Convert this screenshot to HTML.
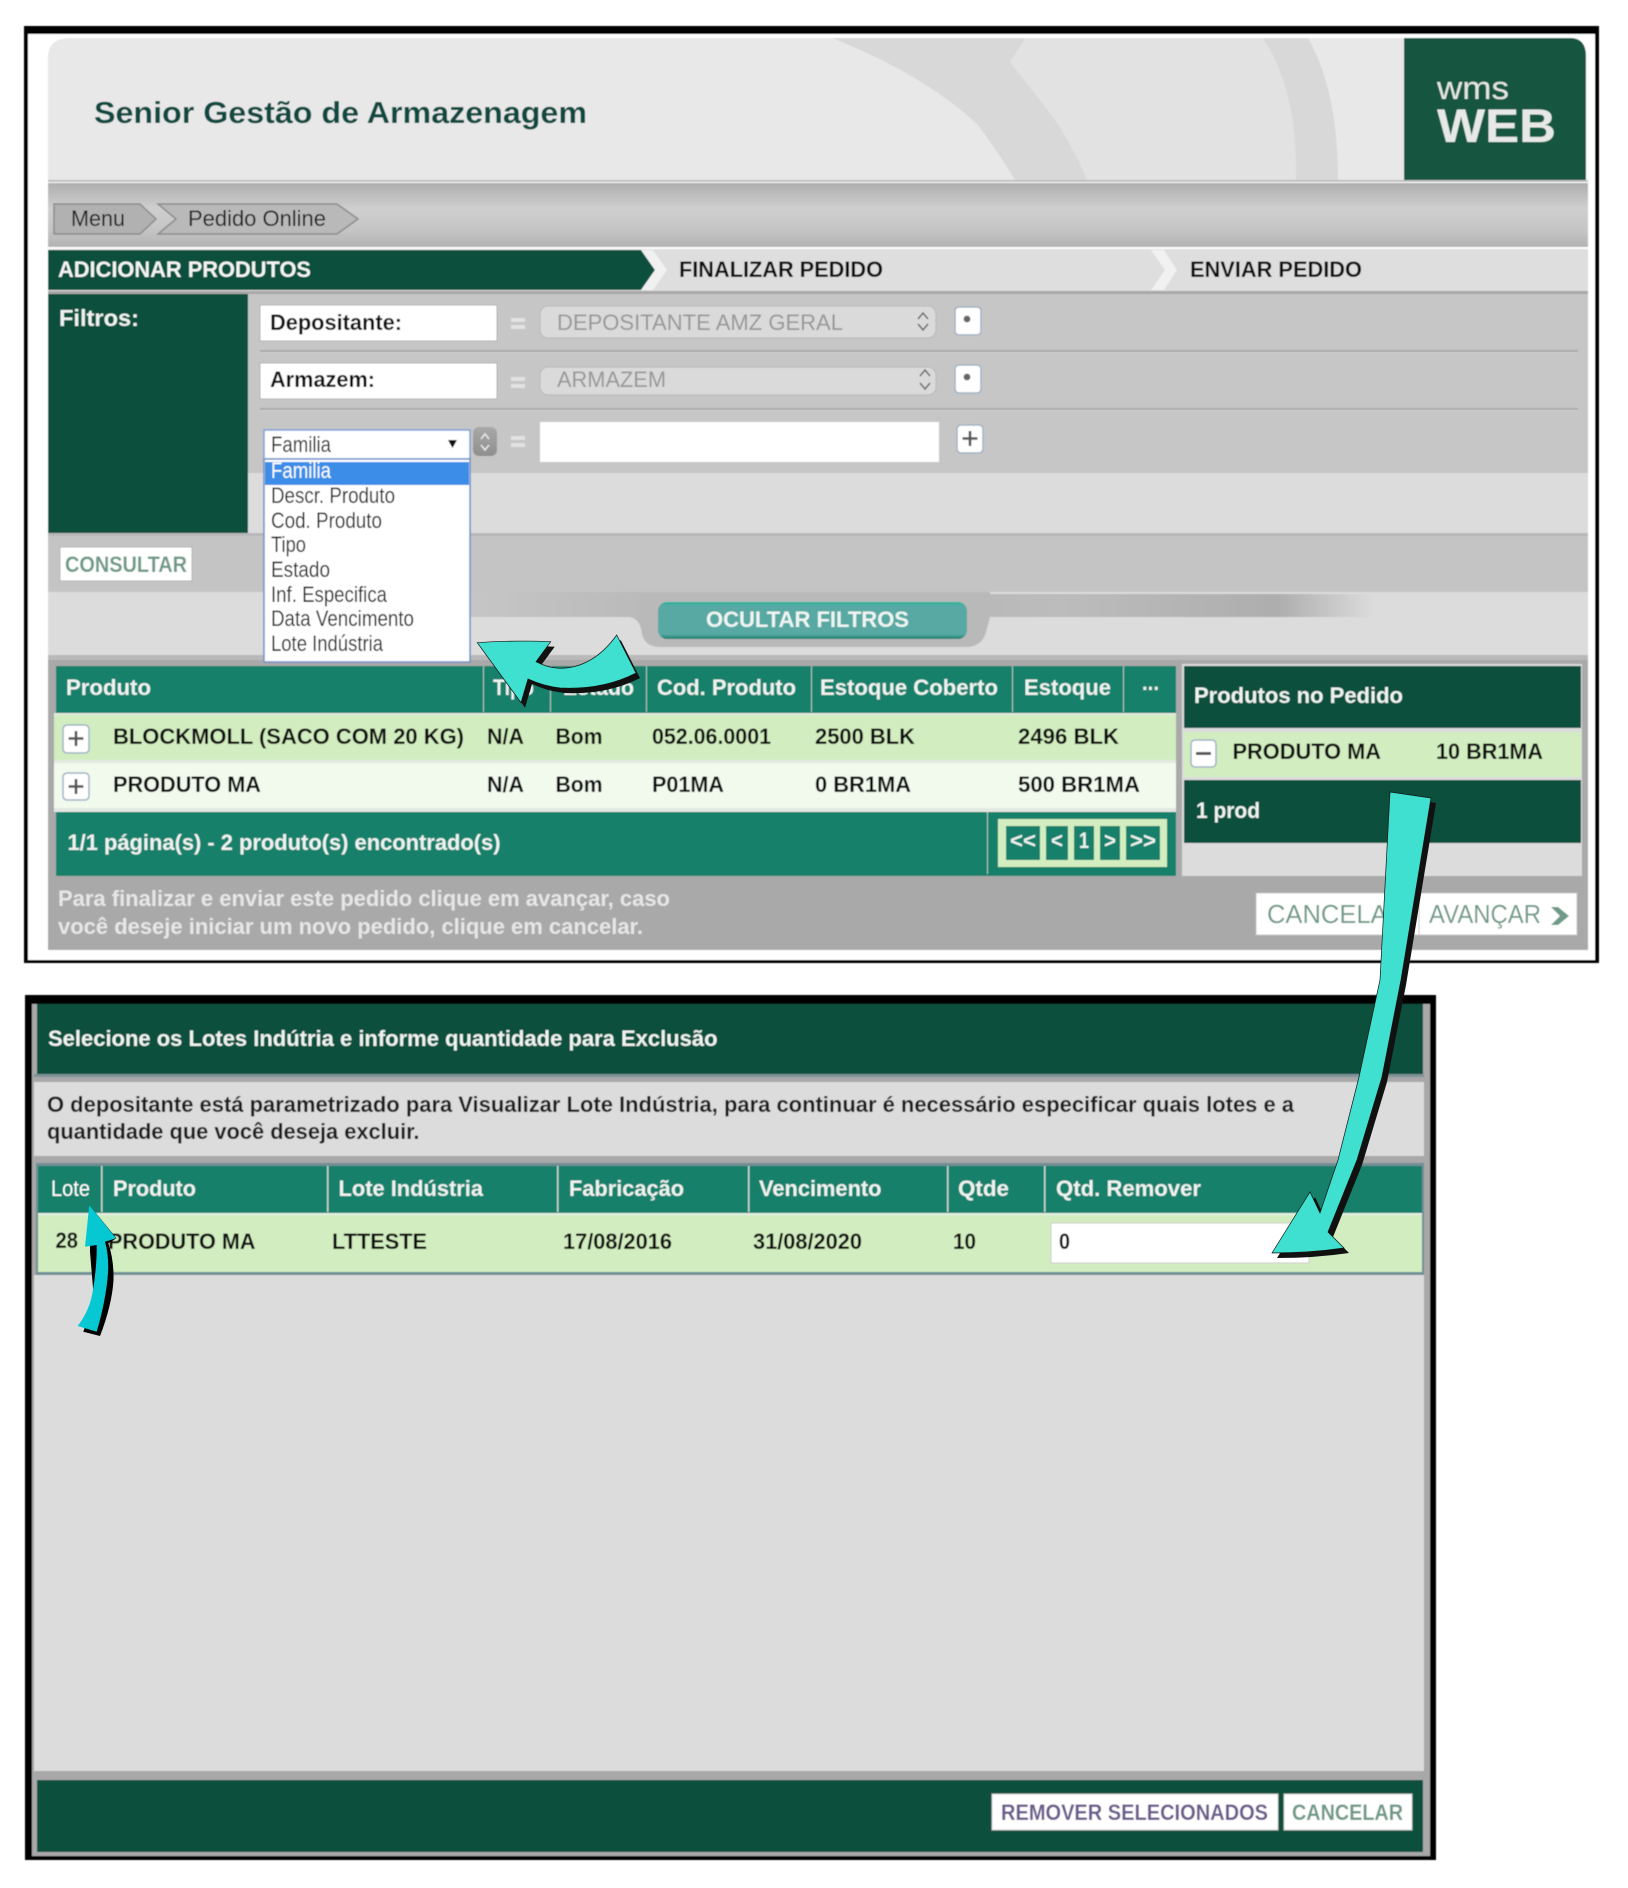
<!DOCTYPE html>
<html lang="pt">
<head>
<meta charset="utf-8">
<title>Senior Gestão de Armazenagem</title>
<style>
html,body{margin:0;padding:0;background:#fff;width:1628px;height:1888px;overflow:hidden}
svg{display:block}
text{font-family:"Liberation Sans",Arial,sans-serif;font-size:22px;fill:#111}
.b{font-weight:700}
.w{fill:#eef3f0;font-weight:700}
.g{fill:#6f9a87;font-weight:700}
.d{fill:#979797}
.n{fill:#1a1a1a}
</style>
</head>
<body>
<svg width="1628" height="1888" viewBox="0 0 1628 1888" xmlns="http://www.w3.org/2000/svg">
<defs>
<filter id="bl" filterUnits="userSpaceOnUse" x="0" y="0" width="1628" height="1888"><feGaussianBlur stdDeviation="0.55"/></filter>
<linearGradient id="bar" x1="0" y1="0" x2="0" y2="1"><stop offset="0" stop-color="#aeaeae"/><stop offset=".4" stop-color="#cfcfcf"/><stop offset=".75" stop-color="#c4c4c4"/><stop offset="1" stop-color="#b2b2b2"/></linearGradient>
<linearGradient id="fade" x1="0" y1="0" x2="1" y2="0"><stop offset="0" stop-color="#b9b9b9"/><stop offset=".2" stop-color="#bcbcbc"/><stop offset=".75" stop-color="#aeaeae"/><stop offset="1" stop-color="#dcdcdc"/></linearGradient>
<linearGradient id="fadeL" x1="0" y1="0" x2="1" y2="0"><stop offset="0" stop-color="#c6c6c6"/><stop offset="1" stop-color="#bababa"/></linearGradient>
<linearGradient id="pill" x1="0" y1="0" x2="0" y2="1"><stop offset="0" stop-color="#20b898"/><stop offset=".1" stop-color="#58a9a3"/><stop offset=".87" stop-color="#58a9a3"/><stop offset="1" stop-color="#1b7f6c"/></linearGradient>
<linearGradient id="step" x1="0" y1="0" x2="0" y2="1"><stop offset="0" stop-color="#a8a8a8"/><stop offset="1" stop-color="#8f8f8f"/></linearGradient>
<clipPath id="hd"><path d="M48 180V58Q48 38 70 38H1570Q1586 38 1586 56V180Z"/></clipPath>
</defs>

<rect width="1628" height="1888" fill="#fff"/>

<g filter="url(#bl)">

<!-- FRAME 1 -->
<rect x="24" y="26" width="1575" height="937" fill="#000"/>
<rect x="28" y="34" width="1567" height="926" fill="#fff"/>

<!-- Header -->
<g clip-path="url(#hd)">
<rect x="48" y="38" width="1538" height="142" fill="#e8e8e8"/>
<path d="M832 38Q925 75 978 125Q1000 155 1015 180H1338Q1338 90 1308 38Z" fill="#d8d8d8"/>
<path d="M1025 38L1010 62L1053 117Q1075 150 1087 180H1296Q1298 90 1263 38Z" fill="#e2e2e2"/>
<rect x="1404" y="38" width="182" height="142" fill="#18573f"/>
</g>
<rect x="48" y="180" width="1540" height="2" fill="#bdbdbd"/>
<text class="b" x="94" y="123" textLength="493" lengthAdjust="spacingAndGlyphs" style="font-size:31px;fill:#0e4a40">Senior Gestão de Armazenagem</text>
<text x="1437" y="99" textLength="72" lengthAdjust="spacingAndGlyphs" style="font-size:32px;fill:#e2e6e4">wms</text>
<text class="b" x="1437" y="142" textLength="119" lengthAdjust="spacingAndGlyphs" style="font-size:47px;fill:#e6e9e7">WEB</text>

<!-- Grey breadcrumb bar -->
<rect x="48" y="183" width="1540" height="64" fill="url(#bar)"/>
<path d="M54 204H140L156 219L140 234H54Z" fill="#b1b1b1" stroke="#8c8c8c" stroke-width="1.5"/>
<path d="M158 204H337L358 219L337 234H158L176 219Z" fill="#b9b9b9" stroke="#8c8c8c" stroke-width="1.5"/>
<text class="n" x="71" y="226" textLength="54" lengthAdjust="spacingAndGlyphs">Menu</text>
<text class="n" x="188" y="226" textLength="138" lengthAdjust="spacingAndGlyphs">Pedido Online</text>

<!-- Steps -->
<rect x="48" y="249" width="1540" height="42" fill="#dedede"/>
<rect x="48" y="291" width="1540" height="3" fill="#a8a8a8"/>
<path d="M48 250H641L655 270L641 290H48Z" fill="#07503d"/>
<path d="M641 250H653L667 270L653 290H641L655 270Z" fill="#f1f1f1"/>
<path d="M1151 250H1164L1177 270L1164 290H1151L1165 270Z" fill="#f1f1f1"/>
<text class="b" x="58" y="277" textLength="253" lengthAdjust="spacingAndGlyphs" style="fill:#f2f5f3">ADICIONAR PRODUTOS</text>
<text class="b" x="679" y="277" textLength="204" lengthAdjust="spacingAndGlyphs">FINALIZAR PEDIDO</text>
<text class="b" x="1190" y="277" textLength="172" lengthAdjust="spacingAndGlyphs">ENVIAR PEDIDO</text>

<!-- Filter panel -->
<rect x="48" y="294" width="1540" height="179" fill="#c6c6c6"/>
<rect x="248" y="473" width="1340" height="60" fill="#dcdcdc"/>
<rect x="48" y="294" width="200" height="240" fill="#07503d"/>
<text class="b" x="59" y="326" textLength="80" lengthAdjust="spacingAndGlyphs" style="font-size:23px;fill:#eef3f0">Filtros:</text>

<!-- row 1 -->
<rect x="260" y="305" width="237" height="36" fill="#fff" stroke="#b3b3b3"/>
<text class="b" x="270" y="330" textLength="132" lengthAdjust="spacingAndGlyphs">Depositante:</text>
<rect x="511" y="318" width="14" height="4" fill="#e2e2e2"/><rect x="511" y="325" width="14" height="4" fill="#e2e2e2"/>
<rect x="540" y="306" width="396" height="32" rx="8" fill="#dadada" stroke="#b8b8b8"/>
<text class="d" x="557" y="330" textLength="286" lengthAdjust="spacingAndGlyphs">DEPOSITANTE AMZ GERAL</text>
<path d="M918 319L923 313L928 319M918 324L923 330L928 324" fill="none" stroke="#666" stroke-width="1.5"/>
<rect x="955" y="307" width="26" height="28" rx="4" fill="#fff" stroke="#9fb2c4" stroke-width="1.5"/>
<circle cx="967" cy="319" r="3.4" fill="#666"/>
<rect x="260" y="350" width="1318" height="2" fill="#a9a9a9"/><rect x="260" y="352" width="1318" height="1" fill="#d2d2d2"/>

<!-- row 2 -->
<rect x="260" y="363" width="237" height="36" fill="#fff" stroke="#b3b3b3"/>
<text class="b" x="270" y="387" textLength="105" lengthAdjust="spacingAndGlyphs">Armazem:</text>
<rect x="511" y="377" width="14" height="4" fill="#e2e2e2"/><rect x="511" y="384" width="14" height="4" fill="#e2e2e2"/>
<rect x="540" y="367" width="396" height="28" rx="8" fill="#dadada" stroke="#b8b8b8"/>
<text class="d" x="557" y="387" textLength="109" lengthAdjust="spacingAndGlyphs">ARMAZEM</text>
<path d="M920 376L925 370L930 376M920 383L925 389L930 383" fill="none" stroke="#666" stroke-width="1.5"/>
<rect x="955" y="365" width="26" height="28" rx="4" fill="#fff" stroke="#9fb2c4" stroke-width="1.5"/>
<circle cx="967" cy="377" r="3.4" fill="#666"/>
<rect x="260" y="408" width="1318" height="2" fill="#a9a9a9"/><rect x="260" y="410" width="1318" height="1" fill="#d2d2d2"/>

<!-- row 3 -->
<rect x="473" y="427" width="24" height="29" rx="6" fill="url(#step)"/>
<path d="M481 439L485 434L489 439M481 445L485 450L489 445" fill="none" stroke="#e8e8e8" stroke-width="1.5"/>
<rect x="511" y="436" width="14" height="4" fill="#e2e2e2"/><rect x="511" y="443" width="14" height="4" fill="#e2e2e2"/>
<rect x="540" y="422" width="399" height="40" fill="#fff"/>
<rect x="957" y="425" width="26" height="28" rx="4" fill="#fff" stroke="#9fb2c4" stroke-width="1.5"/>
<path d="M970 431V446M962.500 438.500H977.500" stroke="#555" stroke-width="2.600" fill="none"/>

<!-- consult bar -->
<rect x="48" y="533" width="1540" height="3" fill="#b8b8b8"/>
<rect x="48" y="536" width="1540" height="56" fill="#c4c4c4"/>
<rect x="60" y="547" width="132" height="34" fill="#fff" stroke="#b5b5b5"/>
<text class="g" x="65" y="572" textLength="122" lengthAdjust="spacingAndGlyphs">CONSULTAR</text>

<!-- hide filters band -->
<rect x="48" y="592" width="1540" height="63" fill="#dcdcdc"/>
<rect x="470" y="592" width="170" height="25" fill="url(#fadeL)"/>
<rect x="985" y="594" width="390" height="23" fill="url(#fade)"/>
<path d="M470 592H990V617Q988 625 986 632Q982 647 966 647H660Q645 647 642 634Q640 617 628 617H470Z" fill="#b9b9b9"/>
<rect x="470" y="592" width="170" height="25" fill="url(#fadeL)"/>
<rect x="658" y="602" width="309" height="37" rx="9" fill="url(#pill)"/>
<text class="b" x="706" y="627" textLength="203" lengthAdjust="spacingAndGlyphs" style="fill:#eef5f3">OCULTAR FILTROS</text>
<rect x="48" y="655" width="1540" height="5" fill="#b9b9b9"/>

<!-- main bg -->
<rect x="48" y="660" width="1540" height="290" fill="#a9a9a9"/>

<!-- products table -->
<rect x="56" y="666" width="1120" height="47" fill="#13806a"/>
<g fill="#a9c9bf">
<rect x="483" y="666" width="1" height="46"/><rect x="550" y="666" width="1" height="46"/><rect x="646" y="666" width="1" height="46"/><rect x="811" y="666" width="1" height="46"/><rect x="1012" y="666" width="1" height="46"/><rect x="1123" y="666" width="1" height="46"/>
</g>
<text class="w" x="66" y="695" textLength="85" lengthAdjust="spacingAndGlyphs">Produto</text>
<text class="w" x="493" y="695" textLength="41" lengthAdjust="spacingAndGlyphs">Tipo</text>
<text class="w" x="563" y="695" textLength="71" lengthAdjust="spacingAndGlyphs">Estado</text>
<text class="w" x="657" y="695" textLength="139" lengthAdjust="spacingAndGlyphs">Cod. Produto</text>
<text class="w" x="820" y="695" textLength="178" lengthAdjust="spacingAndGlyphs">Estoque Coberto</text>
<text class="w" x="1024" y="695" textLength="87" lengthAdjust="spacingAndGlyphs">Estoque</text>
<text class="w" x="1142" y="690" textLength="17" lengthAdjust="spacingAndGlyphs">...</text>

<rect x="54" y="713" width="1122" height="99" fill="#e4e8e2"/>
<rect x="54" y="715" width="1122" height="45" fill="#d2eec0"/>
<rect x="54" y="763" width="1122" height="45" fill="#f2faee"/>

<rect x="63" y="725" width="26" height="28" rx="4" fill="#fff" stroke="#9fb2c4" stroke-width="1.5"/>
<path d="M76 731V746M68.500 738.500H83.500" stroke="#555" stroke-width="2.600" fill="none"/>
<rect x="63" y="773" width="26" height="27" rx="4" fill="#fff" stroke="#9fb2c4" stroke-width="1.5"/>
<path d="M76 779V794M68.500 786.500H83.500" stroke="#555" stroke-width="2.600" fill="none"/>

<text class="b" x="113" y="744" textLength="351" lengthAdjust="spacingAndGlyphs">BLOCKMOLL (SACO COM 20 KG)</text>
<text class="b" x="487" y="744" textLength="37" lengthAdjust="spacingAndGlyphs">N/A</text>
<text class="b" x="555.500" y="744" textLength="47" lengthAdjust="spacingAndGlyphs">Bom</text>
<text class="b" x="652" y="744" textLength="119" lengthAdjust="spacingAndGlyphs">052.06.0001</text>
<text class="b" x="815" y="744" textLength="100" lengthAdjust="spacingAndGlyphs">2500 BLK</text>
<text class="b" x="1018" y="744" textLength="101" lengthAdjust="spacingAndGlyphs">2496 BLK</text>

<text class="b" x="113" y="792" textLength="148" lengthAdjust="spacingAndGlyphs">PRODUTO MA</text>
<text class="b" x="487" y="792" textLength="37" lengthAdjust="spacingAndGlyphs">N/A</text>
<text class="b" x="555.500" y="792" textLength="47" lengthAdjust="spacingAndGlyphs">Bom</text>
<text class="b" x="652" y="792" textLength="72" lengthAdjust="spacingAndGlyphs">P01MA</text>
<text class="b" x="815" y="792" textLength="96" lengthAdjust="spacingAndGlyphs">0 BR1MA</text>
<text class="b" x="1018" y="792" textLength="122" lengthAdjust="spacingAndGlyphs">500 BR1MA</text>

<!-- table footer -->
<rect x="56" y="812" width="1120" height="64" fill="#13806a"/>
<rect x="987" y="812" width="1" height="62" fill="#a9c9bf"/>
<text class="w" x="67.500" y="850" textLength="433" lengthAdjust="spacingAndGlyphs">1/1 página(s) - 2 produto(s) encontrado(s)</text>
<rect x="998" y="819" width="169" height="48" fill="#d2eec0"/>
<g fill="#13806a">
<rect x="1006" y="826" width="34" height="34"/><rect x="1046" y="826" width="22" height="34"/><rect x="1074" y="826" width="20" height="34"/><rect x="1100" y="826" width="20" height="34"/><rect x="1126" y="826" width="34" height="34"/>
</g>
<text class="w" x="1010" y="848" textLength="26" lengthAdjust="spacingAndGlyphs">&lt;&lt;</text>
<text class="w" x="1051" y="848" textLength="12" lengthAdjust="spacingAndGlyphs">&lt;</text>
<text class="w" x="1079" y="848" textLength="10" lengthAdjust="spacingAndGlyphs">1</text>
<text class="w" x="1104" y="848" textLength="12" lengthAdjust="spacingAndGlyphs">&gt;</text>
<text class="w" x="1130" y="848" textLength="26" lengthAdjust="spacingAndGlyphs">&gt;&gt;</text>

<!-- right panel -->
<rect x="1182" y="664" width="400" height="212" fill="#dcdcdc"/>
<rect x="1184" y="666" width="397" height="62" fill="#07503d"/>
<text class="w" x="1194" y="703" textLength="209" lengthAdjust="spacingAndGlyphs">Produtos no Pedido</text>
<rect x="1184" y="732" width="397" height="45" fill="#d2eec0"/>
<rect x="1191" y="740" width="25" height="27" rx="4" fill="#fff" stroke="#9fb2c4" stroke-width="1.5"/>
<rect x="1196" y="752" width="15" height="3" fill="#555"/>
<text class="b" x="1232.500" y="759" textLength="148.500" lengthAdjust="spacingAndGlyphs">PRODUTO MA</text>
<text class="b" x="1436" y="759" textLength="107" lengthAdjust="spacingAndGlyphs">10 BR1MA</text>
<rect x="1184" y="780" width="397" height="63" fill="#07503d"/>
<text class="w" x="1196" y="818" textLength="64" lengthAdjust="spacingAndGlyphs">1 prod</text>

<!-- bottom bar -->
<text class="b" x="58" y="906" textLength="612" lengthAdjust="spacingAndGlyphs" style="fill:#e6e6e6">Para finalizar e enviar este pedido clique em avançar, caso</text>
<text class="b" x="58" y="934" textLength="585" lengthAdjust="spacingAndGlyphs" style="fill:#e6e6e6">você deseje iniciar um novo pedido, clique em cancelar.</text>
<rect x="1256" y="893" width="163" height="42" fill="#fff" stroke="#c4c4c4"/>
<rect x="1419" y="893" width="158" height="42" fill="#fff" stroke="#c4c4c4"/>
<text x="1267" y="923" textLength="139" lengthAdjust="spacingAndGlyphs" style="font-size:26px;fill:#6f9a87">CANCELAR</text>
<text x="1429" y="923" textLength="112" lengthAdjust="spacingAndGlyphs" style="font-size:26px;fill:#6f9a87">AVANÇAR</text>
<path d="M1551 907H1558L1569 916L1558 925H1551L1560 916Z" fill="#6f9a87"/>

<!-- FRAME 2 -->
<rect x="25" y="995" width="1411" height="865" fill="#000"/>
<rect x="32" y="1004" width="1398" height="852" fill="#a8a8a8"/>
<rect x="37" y="1004" width="1386" height="70" fill="#07503d"/>
<rect x="34" y="1082" width="1390" height="74" fill="#dcdcdc"/>
<rect x="34" y="1074" width="1390" height="3" fill="#7d9297"/>
<text class="w" x="48" y="1046" textLength="669.500" lengthAdjust="spacingAndGlyphs">Selecione os Lotes Indútria e informe quantidade para Exclusão</text>
<text class="b" x="47" y="1112" textLength="1247" lengthAdjust="spacingAndGlyphs" style="fill:#1a1a1a">O depositante está parametrizado para Visualizar Lote Indústria, para continuar é necessário especificar quais lotes e a</text>
<text class="b" x="47" y="1139" textLength="372.500" lengthAdjust="spacingAndGlyphs" style="fill:#1a1a1a">quantidade que você deseja excluir.</text>

<rect x="36" y="1163" width="1388" height="112" fill="#6f8f96"/>
<rect x="38" y="1166" width="1384" height="47" fill="#13806a"/>
<rect x="38" y="1213" width="1384" height="2" fill="#e4eee6"/>
<rect x="38" y="1215" width="1384" height="57" fill="#d2eec0"/>
<g fill="#c4d8d2">
<rect x="101" y="1166" width="1.500" height="46"/><rect x="327" y="1166" width="1.500" height="46"/><rect x="557" y="1166" width="1.500" height="46"/><rect x="748" y="1166" width="1.500" height="46"/><rect x="947" y="1166" width="1.500" height="46"/><rect x="1044" y="1166" width="1.500" height="46"/>
</g>
<text x="51" y="1196" textLength="39" lengthAdjust="spacingAndGlyphs" style="fill:#fff">Lote</text>
<text class="w" x="113" y="1196" textLength="83" lengthAdjust="spacingAndGlyphs">Produto</text>
<text class="w" x="338.500" y="1196" textLength="144.500" lengthAdjust="spacingAndGlyphs">Lote Indústria</text>
<text class="w" x="569" y="1196" textLength="115" lengthAdjust="spacingAndGlyphs">Fabricação</text>
<text class="w" x="759" y="1196" textLength="122.500" lengthAdjust="spacingAndGlyphs">Vencimento</text>
<text class="w" x="958" y="1196" textLength="51" lengthAdjust="spacingAndGlyphs">Qtde</text>
<text class="w" x="1056" y="1196" textLength="145" lengthAdjust="spacingAndGlyphs">Qtd. Remover</text>

<text class="b" x="55.500" y="1248" textLength="22.500" lengthAdjust="spacingAndGlyphs">28</text>
<text class="b" x="108" y="1249" textLength="147.500" lengthAdjust="spacingAndGlyphs">PRODUTO MA</text>
<text class="b" x="332" y="1249" textLength="95" lengthAdjust="spacingAndGlyphs">LTTESTE</text>
<text class="b" x="563" y="1249" textLength="109" lengthAdjust="spacingAndGlyphs">17/08/2016</text>
<text class="b" x="753" y="1249" textLength="109" lengthAdjust="spacingAndGlyphs">31/08/2020</text>
<text class="b" x="953" y="1249" textLength="23" lengthAdjust="spacingAndGlyphs">10</text>
<rect x="1051" y="1223" width="258" height="40" fill="#fff" stroke="#c9c9c9"/>
<text class="b" x="1059" y="1249" textLength="11" lengthAdjust="spacingAndGlyphs">0</text>

<rect x="34" y="1275" width="1390" height="496" fill="#dcdcdc"/>
<rect x="37" y="1780" width="1386" height="72" fill="#07503d"/>
<rect x="992" y="1794" width="286" height="36" fill="#fff" stroke="#c4c4c4"/>
<text class="b" x="1001" y="1820" textLength="267" lengthAdjust="spacingAndGlyphs" style="fill:#6b5b8b">REMOVER SELECIONADOS</text>
<rect x="1284" y="1794" width="128" height="36" fill="#fff" stroke="#c4c4c4"/>
<text class="g" x="1292" y="1820" textLength="111" lengthAdjust="spacingAndGlyphs">CANCELAR</text>
</g>

<!-- Dropdown -->
<g filter="url(#bl)">
<rect x="264" y="430" width="206" height="29" fill="#fff" stroke="#7d9fd8" stroke-width="1.500"/>
<text class="n" x="271" y="452" textLength="60" lengthAdjust="spacingAndGlyphs">Familia</text>
<path d="M448 440H457L452.500 448Z" fill="#111"/>
<rect x="264" y="459" width="206" height="203" fill="#fff" stroke="#6f90c8" stroke-width="1.500"/>
<rect x="265" y="462" width="204" height="23" fill="#3b8de8"/>
<text x="271" y="478" textLength="60" lengthAdjust="spacingAndGlyphs" style="fill:#fff">Familia</text>
<text class="n" x="271" y="503" textLength="124" lengthAdjust="spacingAndGlyphs">Descr. Produto</text>
<text class="n" x="271" y="528" textLength="111" lengthAdjust="spacingAndGlyphs">Cod. Produto</text>
<text class="n" x="271" y="552" textLength="35" lengthAdjust="spacingAndGlyphs">Tipo</text>
<text class="n" x="271" y="577" textLength="59" lengthAdjust="spacingAndGlyphs">Estado</text>
<text class="n" x="271" y="602" textLength="116" lengthAdjust="spacingAndGlyphs">Inf. Especifica</text>
<text class="n" x="271" y="626" textLength="143" lengthAdjust="spacingAndGlyphs">Data Vencimento</text>
<text class="n" x="271" y="651" textLength="112" lengthAdjust="spacingAndGlyphs">Lote Indústria</text>
</g>

<!-- Arrow 1 -->
<path transform="translate(4,5)" d="M477.300 642.700Q515 640 550.700 641.700L536 661.700Q548 668 560 668.300Q593 668 616.700 635L636 673Q603 690 560 688Q543 686 528 679L521 702.700Z" fill="#111"/>
<path d="M477.300 642.700Q515 640 550.700 641.700L536 661.700Q548 668 560 668.300Q593 668 616.700 635L636 673Q603 690 560 688Q543 686 528 679L521 702.700Z" fill="#40e0d0" stroke="#111" stroke-width=".7"/>

<!-- Arrow 2 -->
<path transform="translate(5,5)" d="M1390 792L1431 798L1401 980L1382 1077L1357 1160L1328 1232L1344 1248Q1310 1253 1272 1253L1310 1192L1320 1213L1338 1160L1359 1077L1380 980Z" fill="#111"/>
<path d="M1390 792L1431 798L1401 980L1382 1077L1357 1160L1328 1232L1344 1248Q1310 1253 1272 1253L1310 1192L1320 1213L1338 1160L1359 1077L1380 980Z" fill="#40e0d0" stroke="#111" stroke-width=".7"/>

<!-- Arrow 3 -->
<path d="M89.300 1205L116.500 1238.300L108.300 1243.300Q114 1260 113.500 1280Q112 1305 100 1336L83.300 1331.700L94 1300L90 1252L90 1246Z" fill="#000"/>
<path d="M89.300 1205L116 1238.300L105 1241.700Q109 1255 108 1273Q106 1300 96.700 1331.700L77.700 1326Q90 1310 93 1290Q97 1265 96.700 1245L85 1246.700Z" fill="#05c8d2"/>
</svg>
</body>
</html>
